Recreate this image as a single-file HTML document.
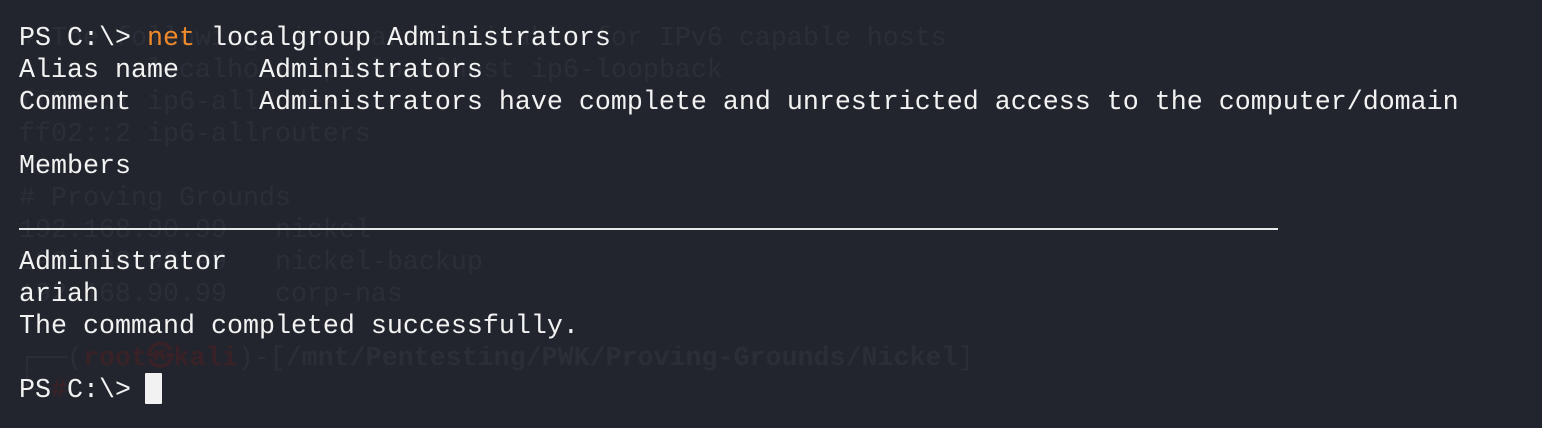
<!DOCTYPE html>
<html><head><meta charset="utf-8"><style>
html,body{margin:0;padding:0;background:#22252e;width:1542px;height:428px;overflow:hidden}
.l{position:absolute;left:19px;font-family:"Liberation Mono","DejaVu Sans Mono",monospace;font-size:26.67px;line-height:32px;white-space:pre;height:32px}
.g{color:#2b2e37}
.w{color:#f2f2f2}
.o{color:#f0892a}
.r{color:#382227;font-weight:bold}
.b{font-weight:bold}
</style></head><body>
<div class="l g" style="top:23px"># The following lines are desirable for IPv6 capable hosts</div>
<div class="l g" style="top:55px">::1     localhost ip6-localhost ip6-loopback</div>
<div class="l g" style="top:87px">ff02::1 ip6-allnodes</div>
<div class="l g" style="top:119px">ff02::2 ip6-allrouters</div>
<div class="l g" style="top:183px"># Proving Grounds</div>
<div class="l g" style="top:215px">192.168.90.99   nickel</div>
<div class="l g" style="top:247px">192.168.90.99   nickel-backup</div>
<div class="l g" style="top:279px">192.168.90.99   corp-nas</div>
<div class="l g" style="top:343px">┌──(<span class="r">root㉿kali</span>)-[<span class="b">/mnt/Pentesting/PWK/Proving-Grounds/Nickel</span>]</div>
<div class="l g" style="top:375px">└─<span class="r">#</span></div>

<div class="l w" style="top:23px">PS C:\&gt; <span class="o">net</span> localgroup Administrators</div>
<div class="l w" style="top:55px">Alias name     Administrators</div>
<div class="l w" style="top:87px">Comment        Administrators have complete and unrestricted access to the computer/domain</div>
<div class="l w" style="top:151px">Members</div>
<div style="position:absolute;left:19px;top:228px;width:1259px;height:2px;background:#e8e8e8"></div>
<div class="l w" style="top:247px">Administrator</div>
<div class="l w" style="top:279px">ariah</div>
<div class="l w" style="top:311px">The command completed successfully.</div>
<div class="l w" style="top:375px">PS C:\&gt; </div>
<div style="position:absolute;left:145px;top:373px;width:17px;height:31px;background:#f2f2f2;border-radius:1px"></div>
</body></html>
